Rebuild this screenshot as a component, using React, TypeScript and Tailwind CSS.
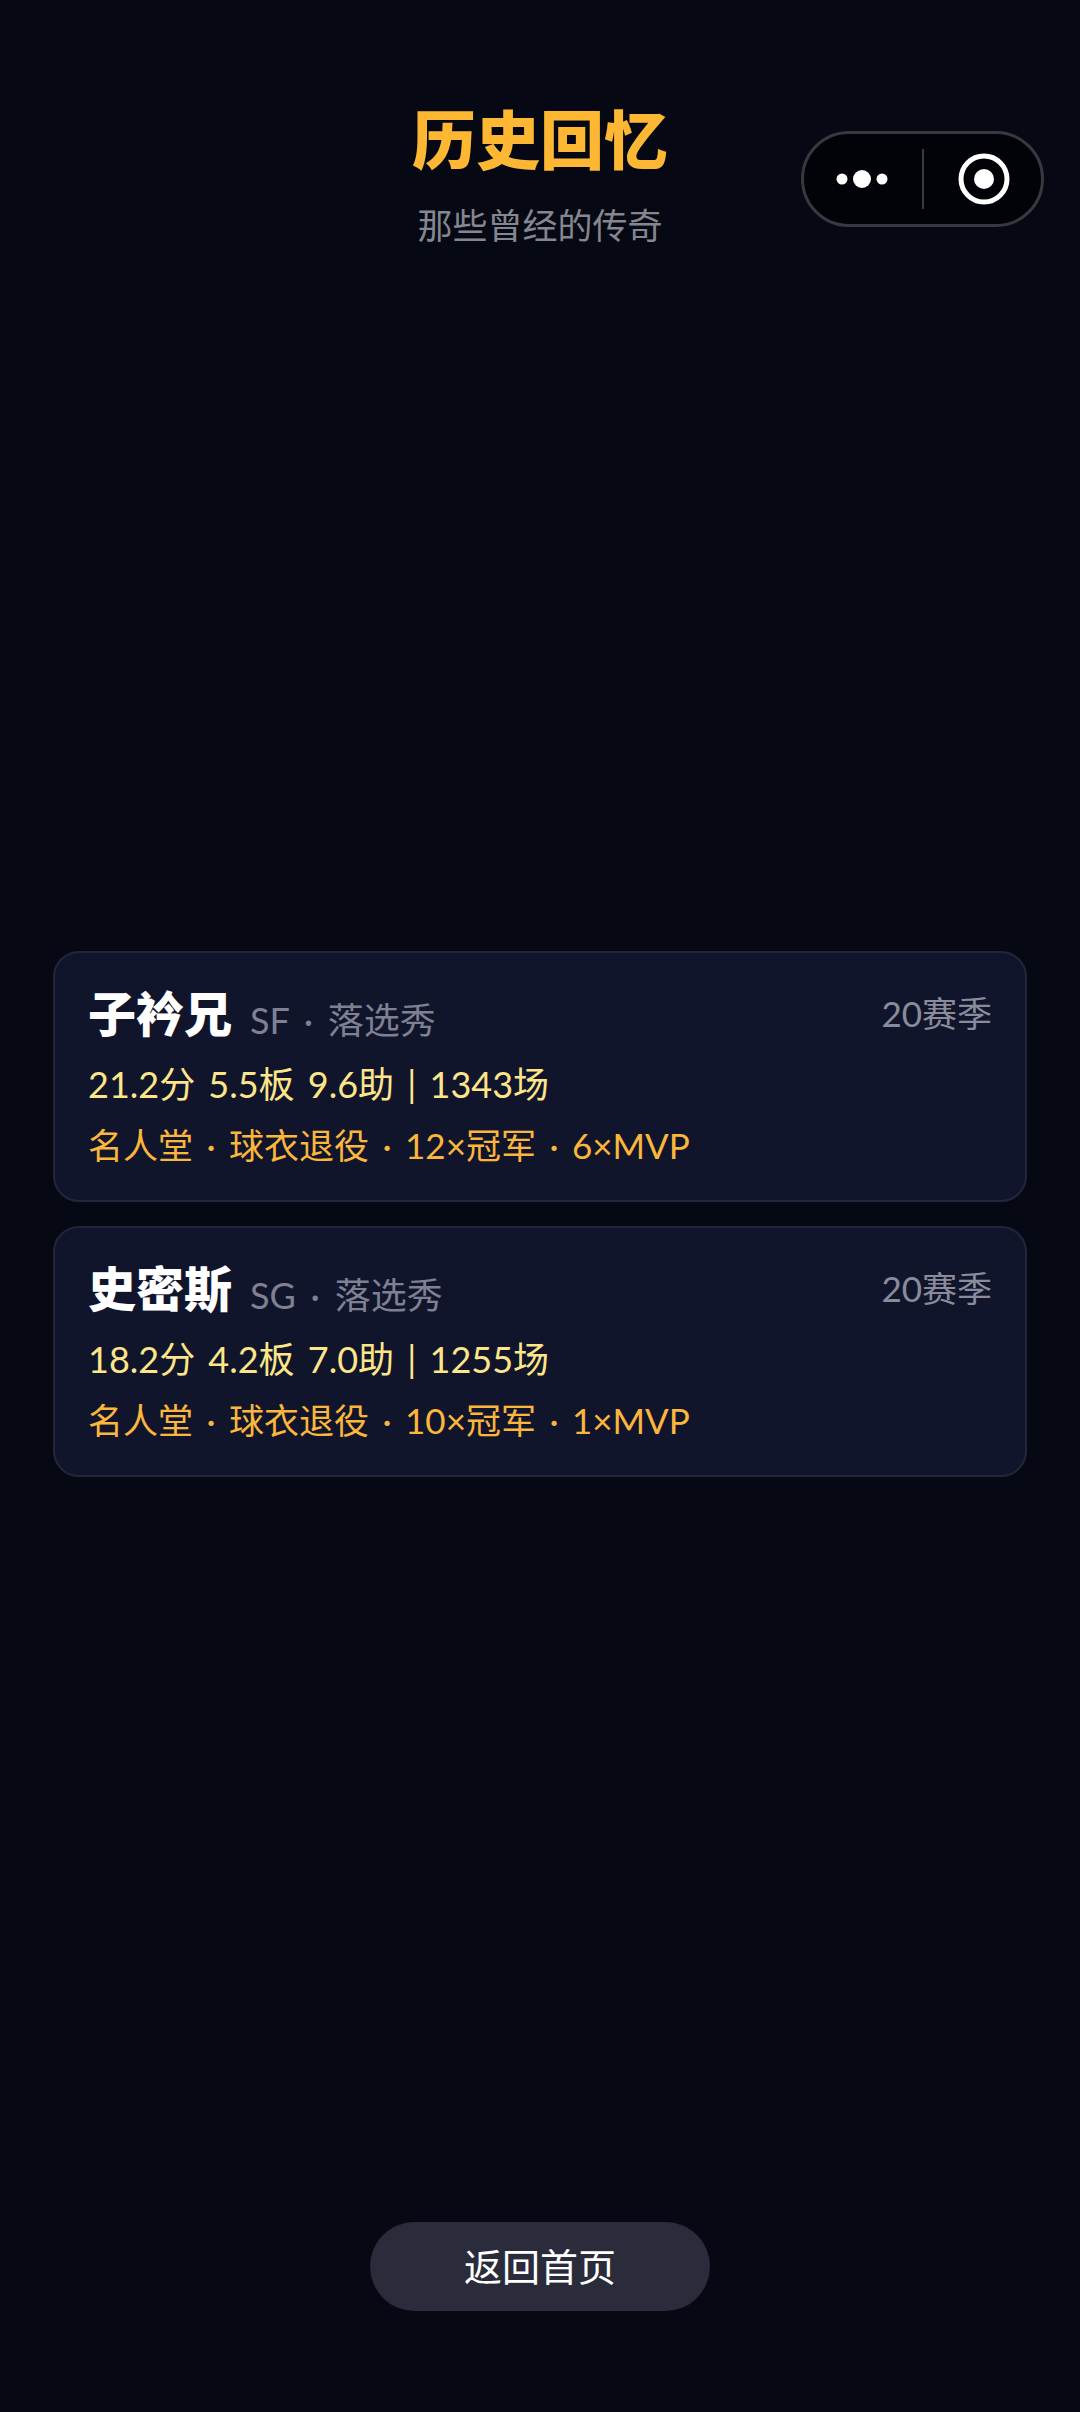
import React from "react"

const players = [
  { name: "子衿兄", info: "SF · 落选秀", season: "20赛季", stats: "21.2分 5.5板 9.6助 | 1343场", tags: "名人堂 · 球衣退役 · 12×冠军 · 6×MVP" },
  { name: "史密斯", info: "SG · 落选秀", season: "20赛季", stats: "18.2分 4.2板 7.0助 | 1255场", tags: "名人堂 · 球衣退役 · 10×冠军 · 1×MVP" },
]

function Capsule() {
  return (
    <div className="absolute left-[801px] top-[131px] w-[243px] h-[96px] rounded-full bg-[#020308] border-[3px] border-[#38393f] flex items-center">
      <svg width="118" height="90" viewBox="0 0 118 90" className="shrink-0">
        <circle cx="38" cy="45" r="5.5" fill="#fff" />
        <circle cx="58" cy="45" r="9" fill="#fff" />
        <circle cx="78" cy="45" r="5.5" fill="#fff" />
      </svg>
      <div className="w-[2px] h-[60px] bg-[#3a3b42]" />
      <svg width="117" height="90" viewBox="0 0 117 90" className="shrink-0">
        <circle cx="60" cy="45" r="23" fill="none" stroke="#fff" strokeWidth="5" />
        <circle cx="60" cy="45" r="10" fill="#fff" />
      </svg>
    </div>
  )
}

export default function App() {
  return (
    <div className="relative w-[1080px] h-[2412px] bg-[#060914] flex flex-col font-['Lato','Noto_Sans_CJK_SC',sans-serif]">
      <Capsule />
      <header className="pt-[104px] flex flex-col items-center">
        <h1 className="text-[64px] leading-[72px] font-black text-[#fdb733]">历史回忆</h1>
        <p className="mt-[25px] text-[35px] leading-[48px] text-[#85868f]">那些曾经的传奇</p>
      </header>
      <main className="mt-[702px] px-[53px] flex flex-col gap-[24px]">
        {players.map((p) => (
          <div key={p.name} className="h-[251px] rounded-[26px] bg-[#11152c] border-2 border-[#23263a] pl-[33px] pr-[33px] pt-[31px]">
            <div className="flex items-start justify-between">
              <div className="flex items-end">
                <span className="text-[48px] leading-[60px] font-black text-white">{p.name}</span>
                <span className="ml-[18px] text-[36px] leading-[47px] [word-spacing:5.5px] text-[#7f8193]">{p.info}</span>
              </div>
              <span className="mt-[4px] text-[35px] leading-[50px] text-[#8b8c9b]">{p.season}</span>
            </div>
            <div className="mt-[14px] text-[36px] leading-[52px] [word-spacing:4px] text-[#fde68a]">{p.stats}</div>
            <div className="mt-[10px] text-[35px] leading-[50px] [word-spacing:4.5px] text-[#fbb63c]">{p.tags}</div>
          </div>
        ))}
      </main>
      <footer className="mt-auto pb-[101px] flex justify-center">
        <button className="w-[340px] h-[89px] rounded-full bg-[#2a2b3b] text-white text-[38px]">返回首页</button>
      </footer>
    </div>
  )
}
